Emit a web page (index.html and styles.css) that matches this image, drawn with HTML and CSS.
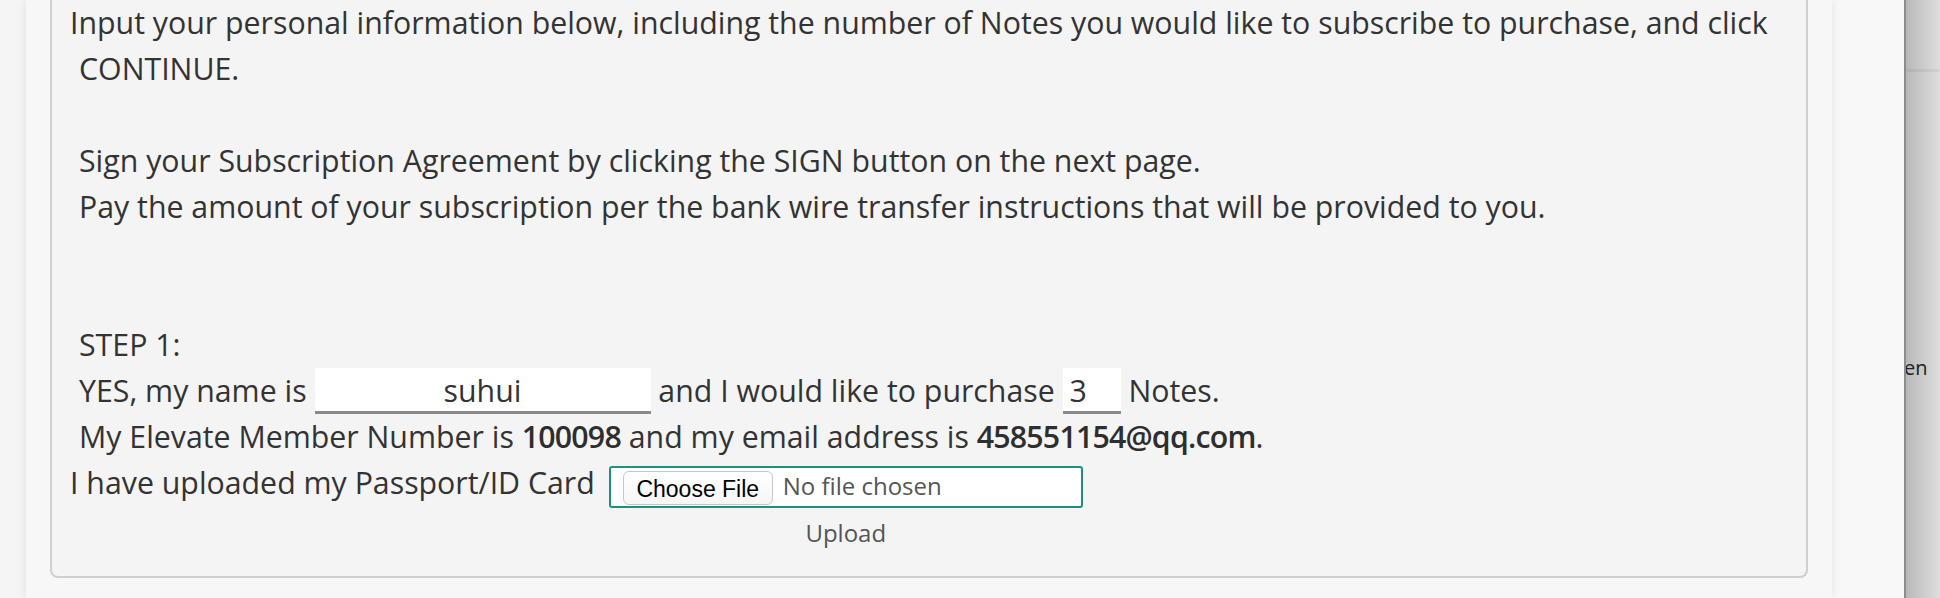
FILE: index.html
```html
<!DOCTYPE html>
<html lang="en">
<head>
<meta charset="utf-8">
<title>Subscription</title>
<link rel="stylesheet" href="styles.css">
</head>
<body>
<div class="page">
  <div class="edge-left"></div>
  <main class="main">
    <section class="panel">
      <p class="line">Input your personal information below, including the number of Notes you would like to subscribe to purchase, and click</p>
      <p class="line indent">CONTINUE.</p>
      <p class="line indent gap1">Sign your Subscription Agreement by clicking the SIGN button on the next page.</p>
      <p class="line indent">Pay the amount of your subscription per the bank wire transfer instructions that will be provided to you.</p>
      <p class="line indent gap2">STEP 1:</p>
      <p class="line indent">YES, my name is <span class="field field-name">suhui</span> and I would like to purchase <span class="field field-qty">3</span> Notes.</p>
      <p class="line indent">My Elevate Member Number is <b class="strong">100098</b> and my email address is <b class="strong">458551154@qq.com</b>.</p>
      <div class="upload-row">
        <span class="line">I have uploaded my Passport/ID Card</span>
        <div class="upload-group">
          <div class="file-box">
            <button class="file-btn" type="button">Choose File</button>
            <span class="file-name">No file chosen</span>
          </div>
          <div class="upload-label">Upload</div>
        </div>
      </div>
    </section>
  </main>
  <div class="side"></div>
  <div class="overlay">
    <div class="overlay-rule"></div>
    <span class="overlay-text">en</span>
  </div>
</div>
</body>
</html>
```

FILE: styles.css
```css
html, body {
  margin: 0;
  padding: 0;
  height: 100%;
  overflow: hidden;
}

body {
  background: #f7f7f7;
  font-family: "Open Sans", "Noto Sans", sans-serif;
  color: #333;
}

.page {
  display: flex;
  height: 598px;
  width: 1940px;
}

.edge-left {
  width: 26px;
  flex: none;
  background: #f5f5f5;
}

.main {
  width: 1806px;
  flex: none;
  background: #f7f7f7;
  position: relative;
  z-index: 1;
  box-shadow: 0 0 10px rgba(0, 0, 0, 0.09);
}

.panel {
  margin: 0 24px;
  background: #f4f4f4;
  border: 2px solid #cfcfcf;
  border-top: none;
  border-radius: 0 0 8px 8px;
  padding: 0 0 28px 18px;
}

.line {
  margin: 0;
  font-size: 30.3px;
  line-height: 46px;
  white-space: nowrap;
}

.indent {
  padding-left: 9px;
}

.gap1 {
  margin-top: 46px;
}

.gap2 {
  margin-top: 92px;
}

.field {
  display: inline-block;
  vertical-align: baseline;
  height: 46px;
  line-height: 46px;
  background: #fff;
  box-shadow: inset 0 -3px 0 #8a8a8a;
}

.field-name {
  width: 336px;
  text-align: center;
}

.field-qty {
  width: 58px;
  padding-left: 7px;
  box-sizing: border-box;
}

.strong {
  font-weight: 600;
  letter-spacing: -0.8px;
  color: #2e2e2e;
}

.upload-row {
  display: flex;
  align-items: flex-start;
}

.upload-group {
  margin-left: 14px;
  margin-top: 6px;
  display: flex;
  flex-direction: column;
  align-items: center;
}

.file-box {
  width: 474px;
  height: 42px;
  box-sizing: border-box;
  border: 2px solid #1f8f80;
  border-radius: 3px;
  background: #fff;
  display: flex;
  align-items: center;
  padding: 1px 0 0 12px;
}

.file-btn {
  width: 150px;
  height: 34px;
  box-sizing: border-box;
  border: 1px solid #c6c6c6;
  border-radius: 6px;
  background: linear-gradient(#ffffff, #f6f6f6);
  font-family: "Liberation Sans", Arial, sans-serif;
  font-size: 23px;
  color: #000;
  padding: 3px 0 0 0;
  margin: 0;
}

.file-name {
  margin-left: 10px;
  margin-top: -5px;
  font-size: 24px;
  color: #555;
}

.upload-label {
  margin-top: 10px;
  font-size: 24px;
  line-height: 30px;
  color: #555;
}

.side {
  width: 72px;
  flex: none;
  background: #f8f8f8;
}

.overlay {
  width: 36px;
  flex: none;
  position: relative;
  overflow: hidden;
  border-left: 2px solid #8c8c8c;
  box-sizing: border-box;
  background: linear-gradient(to right, #b9b9b9, #dedede);
}

.overlay-rule {
  margin-top: 69px;
  height: 3px;
  width: 33px;
  background: rgba(0, 0, 0, 0.05);
}

.overlay-text {
  position: absolute;
  left: -2px;
  top: 354px;
  font-size: 20px;
  color: #222;
}
```
